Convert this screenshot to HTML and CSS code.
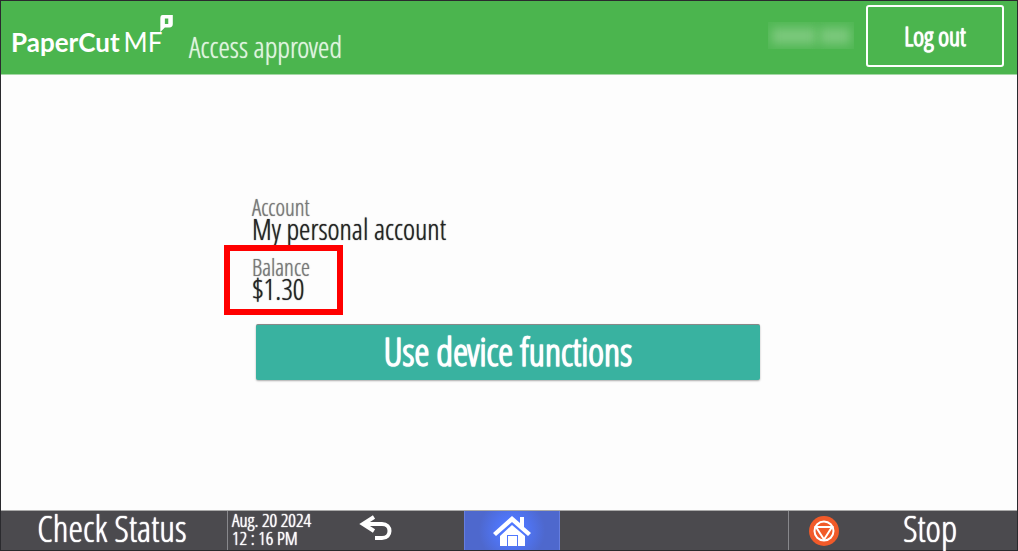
FILE: index.html
```html
<!DOCTYPE html>
<html lang="en">
<head>
<meta charset="utf-8">
<meta name="viewport" content="width=device-width, initial-scale=1">
<title>PaperCut MF</title>
<link rel="stylesheet" href="styles.css">
</head>
<body>
<div class="screen">
  <header class="header">
    <div class="logo">
      <span class="logo-name">PaperCut</span><span class="logo-edition">MF</span>
      <svg class="logo-mark" viewBox="0 0 12 15" aria-hidden="true"><path fill="#fff" fill-rule="evenodd" d="M3 0H12V8Q12 11 9 11H5L1 15V3Q1 0 3 0ZM5 3V8H8V3Z"/></svg>
    </div>
    <h1 class="title">Access approved</h1>
    <span class="user" aria-hidden="true"><span class="user-blur wide"></span><span class="user-blur"></span></span>
    <button class="logout" type="button">Log out</button>
  </header>
  <main class="main">
    <div class="panel">
      <dl class="details">
        <div class="field">
          <dt>Account</dt>
          <dd>My personal account</dd>
        </div>
        <div class="field highlighted">
          <dt>Balance</dt>
          <dd>$1.30</dd>
        </div>
      </dl>
      <button class="primary" type="button">Use device functions</button>
    </div>
  </main>
  <footer class="bar">
    <button class="status" type="button">Check Status</button>
    <div class="clock"><span>Aug. 20 2024</span><span>12 : 16 PM</span></div>
    <button class="back" type="button" aria-label="Back">
      <svg width="36" height="28" viewBox="0 0 36 28" fill="none" stroke="#fff" stroke-width="4" aria-hidden="true"><path d="M17 2L6 9L17 16M6 9H25C35 9 35 23 25 23H18"/></svg>
    </button>
    <button class="home" type="button" aria-label="Home">
      <svg width="40" height="32" viewBox="0 0 40 32" aria-hidden="true"><path fill="#fff" d="M20 1L28 8V2H32V12L39 18L36 21L20 7L4 21L1 18Z"/><path fill="#fff" d="M20 10L33 21V31H26V20H15V31H8V21Z"/><path fill="#fff" d="M16 21H25V31H16Z"/></svg>
    </button>
    <button class="stop" type="button">
      <svg width="32" height="32" viewBox="0 0 32 32" aria-hidden="true"><circle cx="16" cy="16" r="15" fill="#f15a29"/><g fill="none" stroke="#fff" stroke-width="2"><circle cx="16" cy="16" r="9.500"/><path d="M8 12H24L16 24.500Z"/></g></svg>
      <span>Stop</span>
    </button>
  </footer>
</div>
</body>
</html>
```
FILE: styles.css
```css
*, *::after { box-sizing: border-box; }
body {
  margin: 0;
  font-family: "Open Sans Condensed Light", "Roboto Condensed", "Open Sans", sans-serif;
  color: #222;
  text-shadow: 0 0 1px currentColor;
}
button { font: inherit; text-shadow: inherit; color: #fff; border: 0; padding: 0; background: none; }
.screen {
  display: flex;
  flex-direction: column;
  min-height: 100vh;
  border: 1px solid #2a2a2e;
  background: #fdfdfd;
}
.header {
  display: flex;
  align-items: center;
  height: 74px;
  padding: 0 13px 4px 10px;
  background: #4bb54e;
  border-bottom: 1px solid #a5d8a6;
  color: #fff;
}
.logo {
  display: flex;
  align-items: baseline;
  position: relative;
  width: 164px;
  padding-top: 12px;
  font-family: Lato, sans-serif;
  font-size: 26px;
  line-height: 32px;
  text-shadow: none;
}
.logo-name { font-weight: 700; }
.logo-edition { font-weight: 400; margin-left: 4px; }
.logo-mark { position: absolute; right: 2px; top: 1px; width: 14px; height: 17px; }
.title {
  flex: 1;
  margin: 0;
  padding: 22px 0 0 14px;
  font-size: 29px;
  line-height: 30px;
  font-weight: 400;
  color: #e0f5e0;
}
.user {
  display: flex;
  gap: 4px;
  align-items: center;
  height: 27px;
  width: 86px;
  margin-right: 12px;
  padding: 0 4px;
  background: #52b855;
  overflow: hidden;
}
.user-blur { flex: 2; height: 16px; background: #7bc87c; filter: blur(5px); }
.user-blur.wide { flex: 3; }
.logout {
  width: 138px;
  height: 62px;
  border: 2px solid #fff;
  border-radius: 3px;
  font-size: 26px;
  font-weight: 700;
}
.main { flex: 1; display: flex; justify-content: center; align-items: center; padding: 0 18px 9px 16px; }
.panel { width: 100%; max-width: 504px; }
.details { margin: 0 0 24px -4px; display: grid; gap: 16px; }
.field { position: relative; }
.field dt { font-size: 23px; line-height: 22px; color: #777; }
.field dd { margin: 0; font-size: 29px; line-height: 22px; }
.highlighted::after {
  content: "";
  position: absolute;
  left: -28px;
  top: -11px;
  width: 119px;
  height: 70px;
  border: 6px solid #f00;
}
.primary {
  display: block;
  width: 100%;
  height: 56px;
  padding-bottom: 4px;
  border-top: 1px solid #888;
  border-radius: 2px;
  background: #39b2a0;
  box-shadow: 0 1px 2px #aaa;
  font-size: 38px;
  line-height: 50px;
  font-weight: 700;
}
.bar {
  display: grid;
  grid-template-columns: 226fr 130fr 107fr 96fr 228fr 229fr;
  height: 40px;
  border-top: 1px solid #aaa;
  background: #4b4a4e;
  color: #fff;
  text-shadow: 0 0 1px currentColor, 0 0 1px currentColor;
}
.status { padding: 0 4px 5px 0; font-size: 37px; line-height: 34px; }
.clock {
  display: flex;
  flex-direction: column;
  padding-left: 4px;
  border-left: 1px solid #88888c;
  font-size: 19px;
  line-height: 18px;
  white-space: nowrap;
}
.back { text-align: left; }
.back svg { margin-bottom: 4px; }
.home { background: radial-gradient(circle, #5078ff 20%, #4e68cd 65%); border: 1px solid #667ee0; border-width: 0 1px; }
.back svg, .home svg { display: block; }
.home svg { margin: auto; }
.stop {
  grid-column: 6;
  display: flex;
  align-items: center;
  padding-left: 19px;
  border-left: 1px solid #88888c;
  font-size: 37px;
  line-height: 34px;
}
.stop span { flex: 1; padding: 0 0 5px 3px; text-align: center; }
```
